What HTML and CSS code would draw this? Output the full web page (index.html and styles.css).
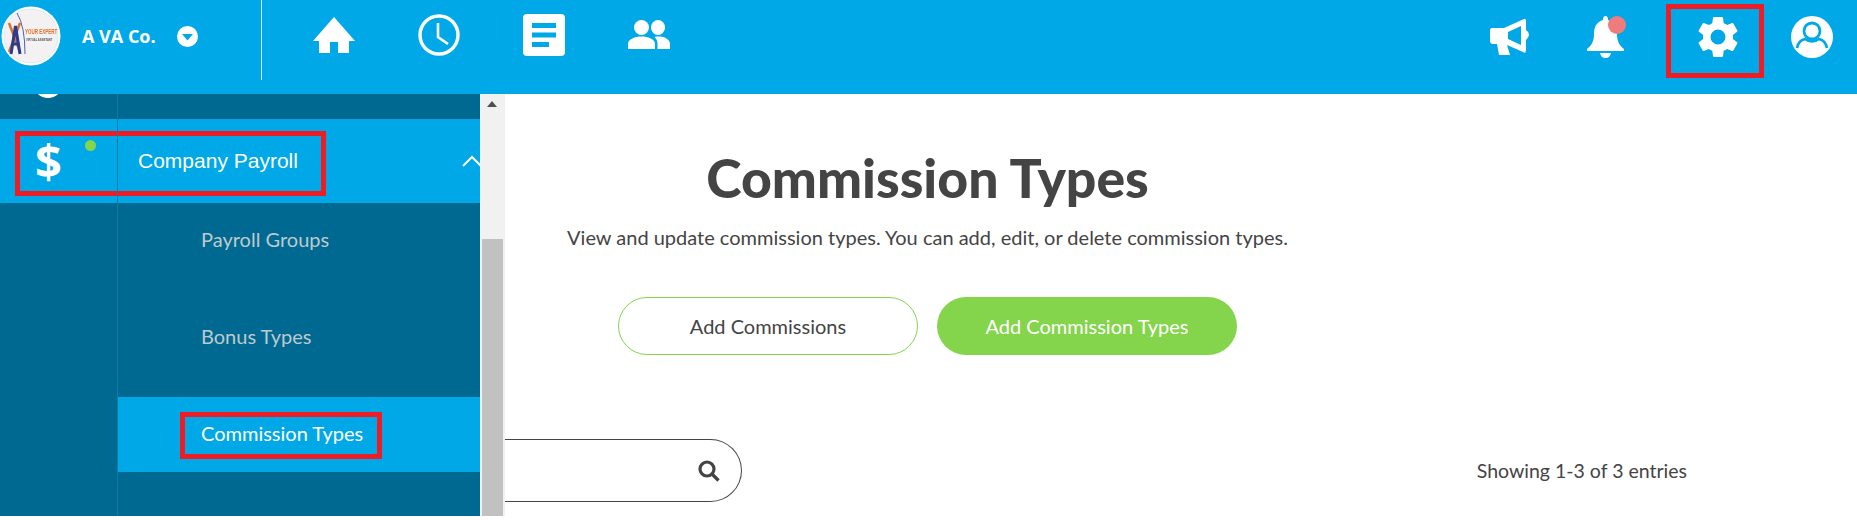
FILE: index.html
```html
<!DOCTYPE html>
<html lang="en">

<head>
  <meta charset="UTF-8">
  <title>Commission Types</title>
  <link rel="stylesheet" href="styles.css">
</head>

<body>
  <header class="topbar">
    <div class="company">
      <svg class="company__logo" viewBox="0 0 60 60">
        <circle cx="30" cy="30" r="29.500" fill="#fff"/>
        <circle cx="30" cy="30" r="27" fill="#f3f1f2" stroke="#bfe6f5" stroke-width=".6"/>
        <g class="logo__art">
          <path d="M8 17 L19 46 M19 17 L8 46" stroke="#e0702c" stroke-width="2.500" fill="none"/>
          <path d="M10 48 L14.500 20 L19 48 M11 38 H18" stroke="#2a3c8f" stroke-width="3" fill="none"/>
          <path d="M16 7 Q24 20 24 48" stroke="#2a3c8f" stroke-width=".8" fill="none"/>
          <text transform="translate(24 28) scale(1 1.600)" class="logo__name">YOUR EXPERT</text>
          <text transform="translate(25 35) scale(1 1.400)" class="logo__tag">VIRTUAL ASSISTANT</text>
        </g>
      </svg>
      <span class="company__name">A VA Co.</span>
      <span class="company__toggle">
        <svg viewBox="0 0 21 21" width="21" height="21">
          <circle cx="10.500" cy="10.500" r="10.500" fill="#fff"/>
          <path d="M5 8 H16 L10.500 14.500 Z" fill="#00a8e8"/>
        </svg>
      </span>
    </div>

    <nav class="topnav">
      <svg class="icon" viewBox="0 0 42 42" width="42" height="42">
        <path d="M21 3 L42 27 H36 V39 H25 V28 H17 V39 H6 V27 H0 Z" fill="#fff"/>
      </svg>
      <svg class="icon" viewBox="0 0 42 42" width="42" height="42">
        <circle cx="21" cy="21" r="19" fill="none" stroke="#fff" stroke-width="3.400"/>
        <path d="M20 9 V23 L30 30" fill="none" stroke="#fff" stroke-width="2.600"/>
      </svg>
      <svg class="icon" viewBox="0 0 42 42" width="42" height="42">
        <rect width="42" height="42" rx="4" fill="#fff"/>
        <path d="M9 9 H33 V14 H9 Z M9 18.500 H33 V23.500 H9 Z M9 28 H26 V33 H9 Z" fill="#00a8e8"/>
      </svg>
      <svg class="icon" viewBox="0 0 42 42" width="42" height="42">
        <ellipse cx="13.500" cy="13.500" rx="7.500" ry="7.500" fill="#fff"/>
        <ellipse cx="30" cy="13.500" rx="7" ry="7.500" fill="#fff"/>
        <path d="M0 35 V30 C0 25 7 22.500 13.500 22.500 C20 22.500 27 25 27 30 V35 Z" fill="#fff"/>
        <path d="M29.500 35 V29 C29.500 26.500 28 24.500 26.500 23 C28 22.600 29.500 22.500 31 22.500 C36 22.500 42 25 42 30 V35 Z" fill="#fff"/>
      </svg>
    </nav>

    <div class="topbar__right">
      <svg class="icon" viewBox="0 0 42 38" width="42" height="38">
        <path d="M2 10 H14 L34 1 Q36 0 36 3 V12 Q42 16 36 22 V32 Q36 36 33 34 L17 27 L20 37 H9 L7 26 H3 Q0 26 0 23 V12 Q0 10 2 10 Z" fill="#fff"/>
        <path d="M18 14 L31 8 V27 L18 21 Z" fill="#00a8e8"/>
      </svg>
      <span class="bell">
        <svg viewBox="0 0 37 42" width="37" height="42">
          <path d="M18.500 0 Q21 0 21 4 C28 6 30 12 30 18 C30 26 33 30 37 33 V35 H0 V33 C4 30 7 26 7 18 C7 12 9 6 16 4 Q16 0 18.500 0 Z M13 37 H24 Q23 42 18.500 42 Q14 42 13 37 Z" fill="#fff"/>
        </svg>
        <i class="bell__dot"></i>
      </span>
      <svg class="icon" viewBox="0 0 24 24" width="50" height="50">
        <path fill="#fff" d="M19.140 12.940c.04-.3.060-.61.060-.94 0-.32-.02-.64-.07-.94l2.030-1.580a.49.49 0 0 0 .12-.61l-1.920-3.320a.49.49 0 0 0-.59-.22l-2.390.96c-.5-.38-1.030-.7-1.620-.94l-.36-2.540a.48.48 0 0 0-.48-.41h-3.840a.48.48 0 0 0-.47.410l-.36 2.540c-.59.24-1.130.57-1.620.94l-2.390-.96a.49.49 0 0 0-.59.22L2.740 8.870a.48.48 0 0 0 .12.610l2.030 1.580c-.05.3-.09.63-.09.94s.02.64.07.94l-2.030 1.580a.49.49 0 0 0-.12.61l1.920 3.320c.12.22.37.29.59.22l2.390-.96c.5.38 1.030.7 1.620.94l.36 2.540c.05.24.24.41.48.41h3.840c.24 0 .44-.17.47-.41l.36-2.540c.59-.24 1.130-.56 1.620-.94l2.390.96c.22.08.47 0 .59-.22l1.920-3.320a.48.48 0 0 0-.12-.61l-2.010-1.580zM12 15.600A3.610 3.610 0 0 1 8.400 12 3.610 3.610 0 0 1 12 8.400a3.610 3.610 0 0 1 3.600 3.600 3.610 3.610 0 0 1-3.600 3.600z"/>
      </svg>
      <svg class="icon" viewBox="0 0 42 42" width="42" height="42">
        <circle cx="21" cy="21" r="21" fill="#fff"/>
        <circle cx="21" cy="15" r="8" fill="none" stroke="#00a8e8" stroke-width="2.800"/>
        <path d="M6 32 C7 26 10 24 14 23 C18 26 24 26 28 23 C32 24 35 26 36 32" fill="none" stroke="#00a8e8" stroke-width="2.800"/>
      </svg>
    </div>
  </header>

  <div class="layout">
    <aside class="sidebar">
      <i class="sidebar__peek"></i>
      <div class="sidebar__row sidebar__row--head">
        <span class="sidebar__icon">$<i class="sidebar__dot"></i></span>
        <span class="sidebar__title">Company Payroll</span>
        <svg class="sidebar__chevron" viewBox="0 0 18 12" width="18" height="12">
          <path d="M1 11 L10 2 L19 11" fill="none" stroke="#fff" stroke-width="2"/>
        </svg>
      </div>
      <ul class="submenu">
        <li>Payroll Groups</li>
        <li>Bonus Types</li>
        <li class="submenu__active">Commission Types</li>
      </ul>
    </aside>

    <div class="scrollbar">
      <span class="scrollbar__arrow"></span>
      <span class="scrollbar__thumb"></span>
    </div>

    <main class="content">
      <section class="intro">
        <h1>Commission Types</h1>
        <p>View and update commission types. You can add, edit, or delete commission types.</p>
        <div class="intro__actions">
          <button type="button" class="btn btn--outline">Add Commissions</button>
          <button type="button" class="btn btn--solid">Add Commission Types</button>
        </div>
      </section>
      <div class="toolbar">
        <div class="search">
          <svg viewBox="0 0 22 22" width="22" height="22">
            <circle cx="9" cy="9" r="7" fill="none" stroke="#444" stroke-width="3.200"/>
            <path d="M14 14 L20.500 20.500" stroke="#444" stroke-width="3.400"/>
          </svg>
        </div>
        <span class="toolbar__count">Showing 1-3 of 3 entries</span>
      </div>
    </main>
  </div>

  <i class="mark mark--gear"></i>
  <i class="mark mark--payroll"></i>
  <i class="mark mark--commission"></i>
</body>

</html>
```

FILE: styles.css
```css
* {
  box-sizing: border-box;
}

body {
  margin: 0;
  height: 520px;
  overflow: hidden;
  font-family: "Lato", sans-serif;
  color: #444;
  background: #fff;
  position: relative;
}

.topbar {
  display: flex;
  align-items: flex-start;
  height: 94px;
  background: #00a8e8;
}

.icon {
  display: block;
  flex: none;
}

.company {
  display: flex;
  align-items: center;
  width: 262px;
  height: 80px;
  padding: 0 0 8px 1px;
  border-right: 1px solid #d5effa;
}

.company__logo {
  width: 60px;
  height: 60px;
}

.logo__art {
  filter: blur(.35px);
}

.logo__name {
  font: bold 4.500px "Liberation Sans", sans-serif;
  fill: #e0702c;
}

.logo__tag {
  font: bold 2.600px "Liberation Sans", sans-serif;
  fill: #555;
}

.company__name {
  margin-left: 21px;
  font: 700 18px "Open Sans", sans-serif;
  color: #fff;
}

.company__toggle {
  display: flex;
  margin-left: 21px;
}

.topnav {
  display: flex;
  gap: 63px;
  align-items: center;
  height: 42px;
  margin: 14px 0 0 51px;
}

.topbar__right {
  display: flex;
  align-items: center;
  height: 42px;
  margin: 16px 24px 0 auto;
}

.bell {
  position: relative;
  display: flex;
  margin-left: 55px;
}

.bell__dot {
  position: absolute;
  right: -2px;
  top: 0;
  width: 18px;
  height: 18px;
  border-radius: 50%;
  background: #ee7c7c;
}

.topbar__right .icon:nth-of-type(2) {
  margin: 0 48px 0 69px;
}

.layout {
  display: flex;
  height: 422px;
}

.sidebar {
  position: relative;
  width: 480px;
  flex: none;
  overflow: hidden;
  padding-top: 25px;
  background: #006992;
}

.sidebar::before {
  content: "";
  position: absolute;
  left: 117px;
  top: 0;
  bottom: 0;
  width: 1px;
  background: #0c7ba6;
  z-index: 1;
}

.sidebar__peek {
  position: absolute;
  left: 33px;
  top: -26px;
  width: 30px;
  height: 30px;
  border-radius: 50%;
  background: #fff;
}

.sidebar__row {
  display: flex;
  align-items: center;
  height: 84px;
  background: #00a8e8;
  color: #fff;
}

.sidebar__icon {
  position: relative;
  width: 117px;
  padding-left: 35px;
  font: 700 47px "Open Sans", sans-serif;
  line-height: 84px;
}

.sidebar__dot {
  position: absolute;
  left: 85px;
  top: 21px;
  width: 11px;
  height: 11px;
  border-radius: 50%;
  background: #84d44c;
}

.sidebar__title {
  margin-left: 21px;
  font: 21px "Liberation Sans", sans-serif;
}

.sidebar__chevron {
  margin: 0 0 0 auto;
}

.submenu {
  list-style: none;
  margin: 0;
  padding: 0 0 0 118px;
}

.submenu li {
  display: flex;
  align-items: center;
  height: 97px;
  padding: 0 0 25px 83px;
  font-size: 20px;
  color: #bfc9cd;
}

.submenu li.submenu__active {
  height: 75px;
  padding-bottom: 3px;
  color: #fff;
  background: #00a8e8;
}

.scrollbar {
  position: relative;
  width: 25px;
  flex: none;
  background: #f1f1f1;
}

.scrollbar__arrow {
  position: absolute;
  left: 7px;
  top: 7px;
  border: 5.500px solid transparent;
  border-top: 0;
  border-bottom: 6px solid #505050;
}

.scrollbar__thumb {
  position: absolute;
  left: 2px;
  right: 2px;
  top: 145px;
  bottom: 0;
  background: #c1c1c1;
}

.content {
  flex: 1;
  min-width: 0;
}

.intro {
  width: 845px;
  text-align: center;
}

.intro h1 {
  margin: 50px 0 0;
  font-size: 53.500px;
  line-height: 66px;
  font-weight: 900;
}

.intro p {
  margin: 14px 0 0;
  font-size: 20px;
  line-height: 26px;
}

.intro__actions {
  display: flex;
  justify-content: center;
  gap: 19px;
  margin-top: 47px;
}

.btn {
  width: 300px;
  height: 58px;
  border-radius: 29px;
  font: 20px "Lato", sans-serif;
}

.btn--outline {
  border: 1px solid #84d44c;
  background: #fff;
  color: #444;
}

.btn--solid {
  border: 0;
  background: #84d44c;
  color: #fff;
}

.toolbar {
  display: flex;
  align-items: center;
  justify-content: space-between;
  margin-top: 84px;
  padding-right: 170px;
}

.search {
  display: flex;
  align-items: center;
  justify-content: flex-end;
  width: 237px;
  height: 63px;
  padding-right: 21px;
  border: 1px solid #444;
  border-left: 0;
  border-radius: 0 32px 32px 0;
}

.toolbar__count {
  font-size: 19.500px;
}

.mark {
  position: absolute;
  border: 5px solid #ee1c25;
}

.mark--gear {
  left: 1666px;
  top: 4px;
  width: 98px;
  height: 74px;
}

.mark--payroll {
  left: 15px;
  top: 131px;
  width: 311px;
  height: 65px;
}

.mark--commission {
  left: 180px;
  top: 412px;
  width: 202px;
  height: 47px;
}
```
